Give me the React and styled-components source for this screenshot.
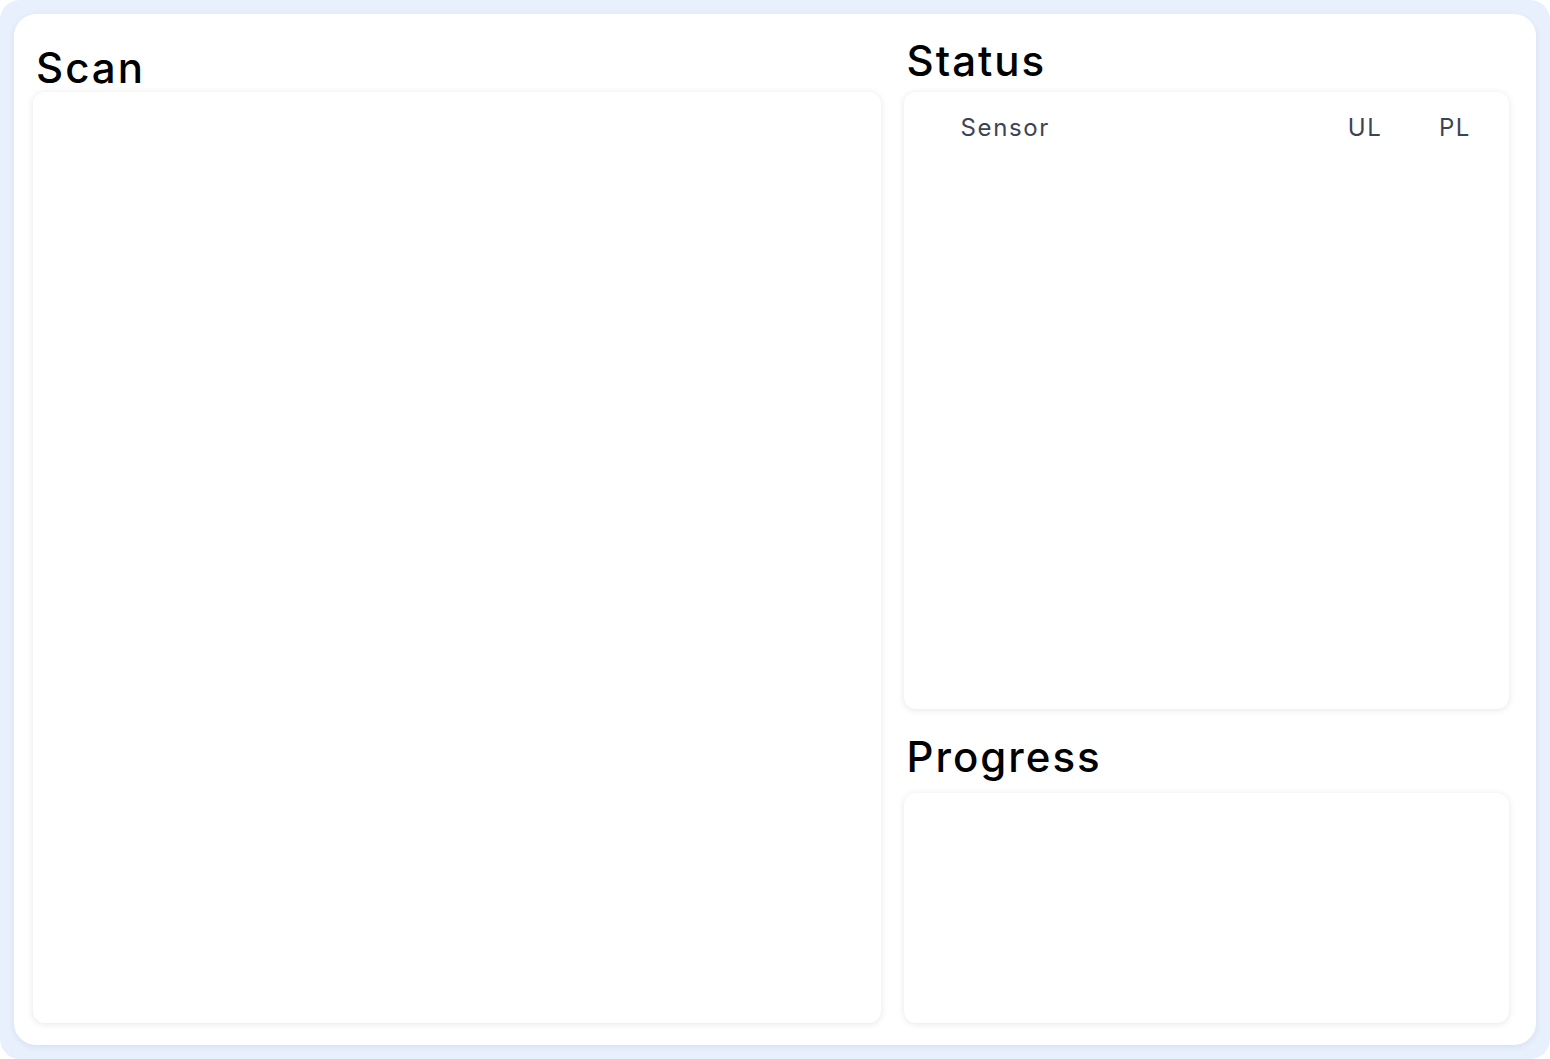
import React from 'react';
import styled, { createGlobalStyle } from 'styled-components';

const GlobalStyle = createGlobalStyle`
  html, body {
    margin: 0;
    padding: 0;
    background: #ffffff;
    font-family: Inter, "Liberation Sans", sans-serif;
  }
  * {
    box-sizing: border-box;
  }
`;

const Frame = styled.div`
  width: 100%;
  height: 100vh;
  padding: 14px;
  background: #e8f0fd;
  border-radius: 20px;
`;

const Card = styled.main`
  height: 100%;
  display: grid;
  grid-template-columns: 7fr 5fr;
  column-gap: 23px;
  padding: 0 27px 22px 19px;
  background: #fff;
  border-radius: 22px;
  box-shadow: 0 2px 6px rgba(30, 40, 80, 0.08);
`;

const Column = styled.section`
  display: flex;
  flex-direction: column;
  min-height: 0;
`;

const Heading = styled.h2`
  margin: ${(p) => p.$mt}px 0 ${(p) => p.$mb}px 3px;
  font-size: 42px;
  line-height: 1;
  font-weight: 500;
  letter-spacing: 2px;
  color: #000;
`;

const Panel = styled.div`
  flex: ${(p) => (p.$height ? `0 0 ${p.$height}px` : '1 1 auto')};
  background: #fff;
  border-radius: 12px;
  box-shadow: 0 1px 7px rgba(0, 0, 0, 0.1);
`;

const TableHead = styled.div`
  display: grid;
  grid-template-columns: 1fr 90px 90px;
  padding: 24px 9px 0 57px;
  font-size: 24px;
  line-height: 24px;
  font-weight: 400;
  letter-spacing: 1.6px;
  color: #3d4356;
`;

const HeadCell = styled.span`
  text-align: ${(p) => (p.$center ? 'center' : 'left')};
`;

export default function App() {
  return (
    <>
      <GlobalStyle />
      <Frame>
        <Card>
          <Column>
            <Heading $mt={33} $mb={3}>Scan</Heading>
            <Panel />
          </Column>
          <Column>
            <Heading $mt={26} $mb={10}>Status</Heading>
            <Panel>
              <TableHead>
                <HeadCell>Sensor</HeadCell>
                <HeadCell $center>UL</HeadCell>
                <HeadCell $center>PL</HeadCell>
              </TableHead>
            </Panel>
            <Heading $mt={27} $mb={15}>Progress</Heading>
            <Panel $height={230} />
          </Column>
        </Card>
      </Frame>
    </>
  );
}
